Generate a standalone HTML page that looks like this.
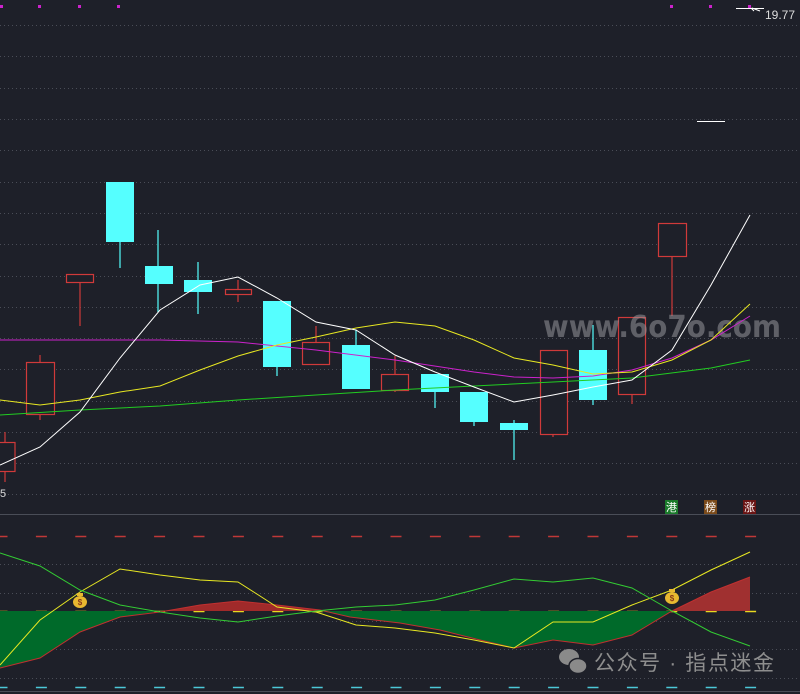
<!DOCTYPE html>
<html><head><meta charset="utf-8"><style>
html,body{margin:0;padding:0;background:#1e2029;width:800px;height:694px;overflow:hidden}
svg{display:block}
</style></head><body>
<svg width="800" height="694" viewBox="0 0 800 694" xmlns="http://www.w3.org/2000/svg">
<rect width="800" height="694" fill="#1e2029"/>
<g stroke="#4a4d57" stroke-width="1" stroke-dasharray="1 3">
<line x1="0" y1="25.5" x2="800" y2="25.5"/><line x1="0" y1="56.5" x2="800" y2="56.5"/><line x1="0" y1="88.5" x2="800" y2="88.5"/><line x1="0" y1="119.5" x2="800" y2="119.5"/><line x1="0" y1="150.5" x2="800" y2="150.5"/><line x1="0" y1="182.5" x2="800" y2="182.5"/><line x1="0" y1="213.5" x2="800" y2="213.5"/><line x1="0" y1="244.5" x2="800" y2="244.5"/><line x1="0" y1="276.5" x2="800" y2="276.5"/><line x1="0" y1="307.5" x2="800" y2="307.5"/><line x1="0" y1="338.5" x2="800" y2="338.5"/><line x1="0" y1="369.5" x2="800" y2="369.5"/><line x1="0" y1="401.5" x2="800" y2="401.5"/><line x1="0" y1="432.5" x2="800" y2="432.5"/><line x1="0" y1="463.5" x2="800" y2="463.5"/><line x1="0" y1="494.5" x2="800" y2="494.5"/>
<line x1="0" y1="564.5" x2="800" y2="564.5"/><line x1="0" y1="593.5" x2="800" y2="593.5"/><line x1="0" y1="621.5" x2="800" y2="621.5"/><line x1="0" y1="649.5" x2="800" y2="649.5"/><line x1="0" y1="678.5" x2="800" y2="678.5"/>
</g>
<line x1="0" y1="514.5" x2="800" y2="514.5" stroke="#4a4d57"/>
<line x1="0" y1="691.5" x2="800" y2="691.5" stroke="#4a4d57"/>
<g fill="#cc22cc"><rect x="0" y="5" width="3" height="3"/><rect x="38" y="5" width="3" height="3"/><rect x="78" y="5" width="3" height="3"/><rect x="117" y="5" width="3" height="3"/><rect x="670" y="5" width="3" height="3"/><rect x="709" y="5" width="3" height="3"/><rect x="748" y="5" width="3" height="3"/></g>
<line x1="736" y1="8.5" x2="764" y2="8.5" stroke="#fff"/>
<path d="M752 8 l8 3 M751 8 l3 3" stroke="#fff"/>
<text x="765" y="19" fill="#ddd" font-family="Liberation Sans,sans-serif" font-size="12">19.77</text>
<line x1="697" y1="121.5" x2="725" y2="121.5" stroke="#fff"/>
<text x="0" y="497" fill="#ddd" font-family="Liberation Sans,sans-serif" font-size="11">5</text>
<!-- wicks -->
<g stroke="#d03a3a" stroke-width="1.2">
<line x1="5" y1="432" x2="5" y2="482"/><line x1="40" y1="355" x2="40" y2="420"/><line x1="80" y1="282" x2="80" y2="326"/><line x1="238" y1="280" x2="238" y2="302"/><line x1="316" y1="326" x2="316" y2="364"/><line x1="395" y1="356" x2="395" y2="392"/><line x1="553" y1="434" x2="553" y2="437"/><line x1="632" y1="394" x2="632" y2="404"/><line x1="672" y1="256" x2="672" y2="316"/>
</g>
<g stroke="#5ff" stroke-width="1.2">
<line x1="120" y1="242" x2="120" y2="268"/><line x1="158" y1="230" x2="158" y2="312"/><line x1="198" y1="262" x2="198" y2="314"/><line x1="277" y1="367" x2="277" y2="376"/><line x1="356" y1="330" x2="356" y2="389"/><line x1="435" y1="392" x2="435" y2="408"/><line x1="474" y1="422" x2="474" y2="426"/><line x1="514" y1="420" x2="514" y2="460"/><line x1="593" y1="325" x2="593" y2="405"/>
</g>
<g fill="#1e2029" stroke="#d03a3a" stroke-width="1.2">
<rect x="-12" y="442.5" width="27" height="29"/><rect x="26.5" y="362.5" width="28" height="52"/><rect x="66.5" y="274.5" width="27" height="8"/><rect x="225.5" y="289.5" width="26" height="5"/><rect x="302.5" y="342.5" width="27" height="22"/><rect x="381.5" y="374.5" width="27" height="16"/><rect x="540.5" y="350.5" width="27" height="84"/><rect x="618.5" y="317.5" width="27" height="77"/><rect x="658.5" y="223.5" width="28" height="33"/>
</g>
<g fill="#55ffff">
<rect x="106" y="182" width="28" height="60"/><rect x="145" y="266" width="28" height="18"/><rect x="184" y="280" width="28" height="12"/><rect x="263" y="301" width="28" height="66"/><rect x="342" y="345" width="28" height="44"/><rect x="421" y="374" width="28" height="18"/><rect x="460" y="392" width="28" height="30"/><rect x="500" y="423" width="28" height="7"/><rect x="579" y="350" width="28" height="50"/>
</g>
<text x="543" y="337" fill="rgba(150,150,155,0.55)" font-family="DejaVu Sans,Liberation Sans,sans-serif" font-size="30" font-weight="bold" textLength="238" lengthAdjust="spacingAndGlyphs">www.6o7o.com</text>
<g fill="none" stroke-width="1">
<polyline stroke="#22cc22" points="0,415 80,410 160,406 238,400 316,395 395,390 474,386 553,382 632,378 711,368 750,360"/>
<polyline stroke="#cc22cc" points="0,340 80,340 160,340 238,342 316,350 395,360 474,372 514,377 553,378 593,376 632,370 672,358 711,340 750,316"/>
<polyline stroke="#e8e822" points="0,400 40,405 80,400 120,392 160,386 200,370 238,356 277,345 316,337 356,328 395,322 435,326 474,340 514,358 553,365 593,374 632,372 672,360 711,340 750,304"/>
<polyline stroke="#ffffff" points="0,465 40,447 80,412 120,358 160,310 200,285 238,277 277,298 316,322 356,330 395,355 435,372 474,387 514,402 553,395 593,387 632,380 672,350 711,285 750,215"/>
</g>
<g font-family="Liberation Sans,'Noto Sans CJK SC',sans-serif" font-size="11" fill="#fff" text-anchor="middle">
<rect x="665" y="500" width="13" height="14" fill="#1a7a2a"/><text x="671.5" y="511">港</text>
<rect x="704" y="500" width="13" height="14" fill="#7a4a1a"/><text x="710.5" y="511">榜</text>
<rect x="743" y="500" width="13" height="14" fill="#6a1414"/><text x="749.5" y="511">涨</text>
</g>
<!-- bottom panel -->
<g stroke-width="1.5" stroke-dasharray="11 28.4">
<line x1="-3.5" y1="536.5" x2="757" y2="536.5" stroke="#c03838"/>
<line x1="-3.5" y1="611.5" x2="757" y2="611.5" stroke="#e8d820"/>
<line x1="-3.5" y1="687.5" x2="757" y2="687.5" stroke="#4cc8d8"/>
</g>
<path d="M0,611 L160,611 L120,617 L80,632 L40,658 L0,668 Z" fill="#006a2a"/>
<path d="M160,612 L200,605 L238,601 L277,605 L320,610 L320,611 L160,611 Z" fill="#a02a2a"/>
<path d="M320,611 L672,611 L632,635 L593,645 L553,640 L514,648 L480,640 L440,630 L400,623 L350,617 Z" fill="#006a2a"/>
<path d="M672,611 L711,592 L750,577 L750,611 Z" fill="#a03030"/>
<g fill="none" stroke-width="1">
<polyline stroke="#c03030" points="0,668 40,658 80,632 120,617 160,612 200,605 238,601 277,605 320,610 350,617 400,623 440,630 480,640 514,648 553,640 593,645 632,635 672,611 711,592 750,577"/>
<polyline stroke="#e8e822" points="0,665 40,620 80,592 120,569 160,575 200,580 238,582 260,596 277,607 316,612 356,625 395,628 435,633 474,640 514,648 553,622 593,622 632,605 672,590 711,570 750,552"/>
<polyline stroke="#33cc33" points="0,553 40,566 80,590 120,605 160,612 200,618 238,622 277,616 316,611 356,607 395,605 435,600 474,590 514,579 553,582 593,578 632,588 672,611 711,632 750,646"/>
</g>
<g font-family="Liberation Sans,sans-serif" font-size="8" font-weight="bold" text-anchor="middle">
<ellipse cx="80" cy="602" rx="7" ry="6" fill="#e8b830"/><rect x="77" y="593" width="6" height="3" fill="#e8b830"/><text x="80" y="605" fill="#8a3a1a">$</text>
<ellipse cx="672" cy="598" rx="7" ry="6" fill="#e8b830"/><rect x="669" y="589" width="6" height="3" fill="#e8b830"/><text x="672" y="601" fill="#8a3a1a">$</text>
</g>
<g fill="#8a8a8a">
<ellipse cx="569" cy="657" rx="10" ry="8"/><ellipse cx="578" cy="666" rx="9" ry="7.5" stroke="#1e2029" stroke-width="1.5"/>
</g>
<text x="594" y="670" fill="#8e8e8e" font-family="Liberation Sans,'Noto Sans CJK SC',sans-serif" font-size="21" textLength="180" lengthAdjust="spacing">公众号 · 指点迷金</text>
</svg>
</body></html>
